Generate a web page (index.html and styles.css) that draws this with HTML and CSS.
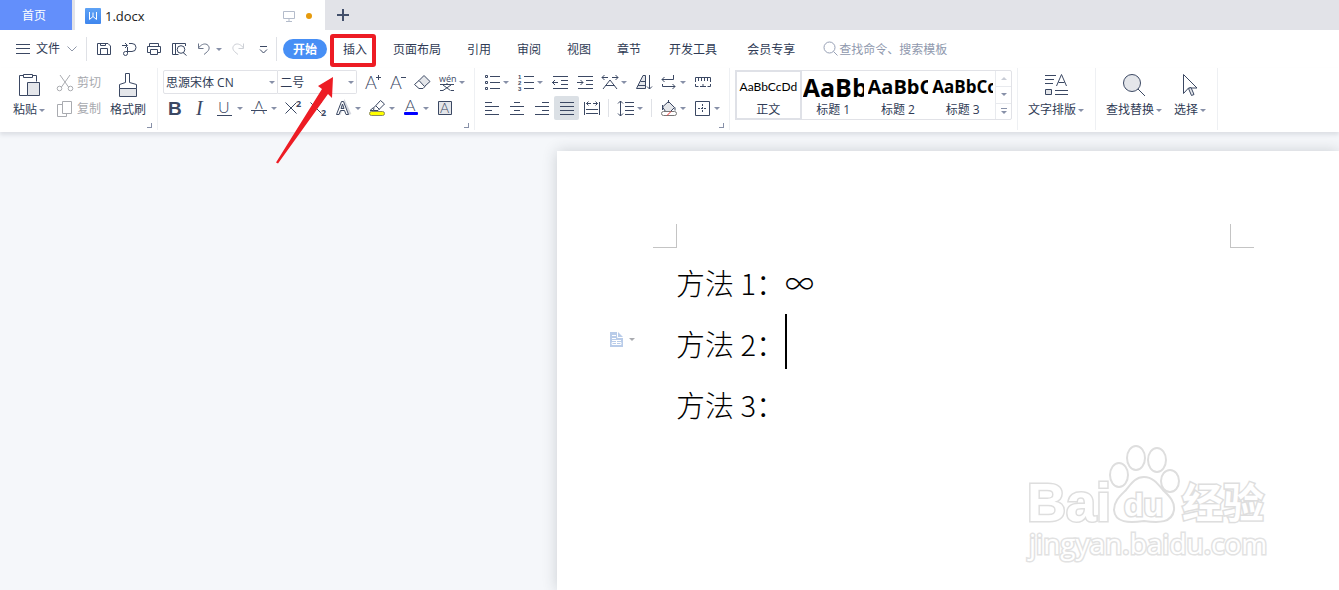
FILE: index.html
```html
<!DOCTYPE html>
<html lang="zh-CN">
<head>
<meta charset="utf-8">
<title>1.docx</title>
<link rel="stylesheet" href="styles.css">
</head>
<body>
<header class="tabs">
  <button class="tab-home">首页</button>
  <div class="tab-doc">
    <svg class="logo" width="16" height="16" viewBox="0 0 16 16"><defs><linearGradient id="lg" x1="0" y1="0" x2="0" y2="1"><stop offset="0" stop-color="#5ea2f5"/><stop offset="1" stop-color="#3f86ee"/></linearGradient></defs><rect width="16" height="16" rx="1" fill="url(#lg)"/><path d="M4.500 4V11.500L8 8.500L11.500 11.500V4M8 4.500V8.500" fill="none" stroke="#fff"/></svg>
    <span class="tab-name">1.docx</span>
    <svg class="i monitor" width="12" height="12" viewBox="0 0 12 12"><path d="M.5 1.500h11v7h-11zM6 8.500v3M3 11.500h6"/></svg>
    <span class="dot"></span>
  </div>
  <button class="tab-add" aria-label="新建"><svg width="12" height="12" viewBox="0 0 12 12"><path d="M6 0v12M0 6h12" stroke="#43506b" stroke-width="2"/></svg></button>
</header>

<nav class="menu">
  <button class="file">
    <svg class="i" width="14" height="12" viewBox="0 0 14 12"><path d="M0 1.500h14M0 5.500h14M0 10.500h14"/></svg>
    <span>文件</span>
    <svg class="i soft" width="10" height="6" viewBox="0 0 10 6"><path d="M.5 .5L5 5L9.500 .5"/></svg>
  </button>
  <div class="quick">
    <button class="b" aria-label="保存"><svg class="i" viewBox="0 0 24 24"><path d="M5.500 6.500h10.500l2.500 2.500v8.500h-13zM8.500 17v-5.500h7V17M8.500 6.500v2h5v-2"/></svg></button>
    <button class="b" aria-label="输出"><svg class="i" viewBox="0 0 24 24"><path d="M5 8.500h5M8 6l2.500 2.500L8 11M12 6.500h3a3.800 3.800 0 0 1 0 8h-6.500a2 2 0 1 0 2 2V10"/></svg></button>
    <button class="b" aria-label="打印"><svg class="i" viewBox="0 0 24 24"><path d="M7.500 9V6.500h9V9M8.500 15.500h-3V9.500h13v6h-3M8.500 12.500h7v5h-7z"/></svg></button>
    <button class="b" aria-label="打印预览"><svg class="i" viewBox="0 0 24 24"><path d="M18.500 9V6.500h-13v11h6M8.500 6.500v11M16 15.500l3.500 3"/><circle cx="14" cy="12.500" r="3.800"/></svg></button>
    <button class="b drop" aria-label="撤销"><svg class="i mid" viewBox="0 0 24 24"><path d="M6.500 6.500v5h5M6.500 11c2-3 5.500-5 8.500-3.500 3 2 2.500 5 .5 7l-3.500 3"/></svg><i class="caret"></i></button>
    <button class="b" aria-label="恢复"><svg class="i pale" viewBox="0 0 24 24"><path d="M17.500 6.500v5h-5M17.500 11c-2-3-5.500-5-8.500-3.500-3 2-2.500 5-.5 7l3.500 3"/></svg></button>
    <button class="b" aria-label="更多"><svg class="i" viewBox="0 0 24 24"><path d="M9 9.500h7M9 12.500l3.500 3.500 3.500-3.500"/></svg></button>
  </div>
  <button class="item active">开始</button>
  <button class="item">插入</button>
  <button class="item">页面布局</button>
  <button class="item">引用</button>
  <button class="item">审阅</button>
  <button class="item">视图</button>
  <button class="item">章节</button>
  <button class="item wide">开发工具</button>
  <button class="item wide">会员专享</button>
  <label class="search">
    <svg class="i" width="16" height="16" viewBox="0 0 16 16"><circle cx="6.500" cy="6.500" r="5.500"/><path d="M10.500 10.500l4 4"/></svg>
    <input type="text" placeholder="查找命令、搜索模板" aria-label="查找命令">
  </label>
</nav>

<section class="ribbon">
  <div class="group clip">
    <button class="big">
      <svg class="i" viewBox="0 0 24 26"><path d="M6 3.500H2.500v20h8M16 3.500h3.500v6M6.500 2.500h9v3h-9z"/><path class="f" d="M10.500 10.500h12v13h-12z"/></svg>
      <span>粘贴<i class="caret"></i></span>
    </button>
    <div class="stack">
      <button class="line"><svg class="i" width="18" height="18" viewBox="0 0 18 18"><path d="M4 1l8.500 12M14 1L5.500 13"/><circle cx="3.500" cy="14.500" r="2.300"/><circle cx="14.500" cy="14.500" r="2.300"/></svg>剪切</button>
      <button class="line"><svg class="i" width="18" height="18" viewBox="0 0 18 18"><path d="M6.500 1.500h9v12h-9zM6 4.500H1.500v12h9V14"/></svg>复制</button>
    </div>
    <button class="big">
      <svg class="i" viewBox="0 0 24 26"><path class="f" d="M3.500 16.500h17v8h-17z"/><path d="M3.500 16.500v-4l6-2v-9h4v9l7 2v4"/></svg>
      <span>格式刷</span>
    </button>
    <i class="launch"></i>
  </div>

  <div class="group tools font">
    <div class="row">
      <span class="combo family"><select aria-label="字体"><option>思源宋体 CN</option></select><i class="caret"></i></span>
      <span class="combo size"><select aria-label="字号"><option>二号</option></select><i class="caret"></i></span>
      <button class="b" aria-label="增大字号"><svg class="i" viewBox="0 0 24 24"><text x="4" y="19" class="t18">A</text><path d="M15 7.500h5M17.500 5v5"/></svg></button>
      <button class="b" aria-label="减小字号"><svg class="i" viewBox="0 0 24 24"><text x="4" y="19" class="t18">A</text><path d="M15 7.500h5"/></svg></button>
      <button class="b" aria-label="清除格式"><svg class="i" viewBox="0 0 24 24"><path class="f" d="M9 10.500l5-5 6 6-5.500 5z"/><path d="M9 10.500l-4.500 4 4.500 4h4l2-2"/></svg></button>
      <button class="b drop" aria-label="拼音指南"><svg class="i" viewBox="0 0 24 24"><text x="4" y="12" class="pin">wén</text><path d="M5 14.500h14M12 13v2M8 15l7.500 5.500M16 15l-8 5.500M5 20.500h3M16 20.500h3"/></svg><i class="caret"></i></button>
    </div>
    <div class="row">
      <button class="b" aria-label="加粗"><svg class="i" viewBox="0 0 24 24"><text x="5" y="19" class="bold">B</text></svg></button>
      <button class="b" aria-label="倾斜"><svg class="i" viewBox="0 0 24 24"><text x="8" y="19" class="ital">I</text></svg></button>
      <button class="b drop" aria-label="下划线"><svg class="i" viewBox="0 0 24 24"><text x="5" y="17" class="t16">U</text><path d="M4 19.500h15"/></svg><i class="caret"></i></button>
      <button class="b drop" aria-label="删除线"><svg class="i" viewBox="0 0 24 24"><text x="6" y="18" class="t18">A</text><path class="k" d="M4 13.500h16"/><path d="M4 14.500h16"/></svg><i class="caret"></i></button>
      <button class="b" aria-label="上标"><svg class="i" viewBox="0 0 24 24"><path d="M4.500 6.500l11 11M15.500 6.500l-11 11"/><text x="15" y="11" class="sup">2</text></svg></button>
      <button class="b" aria-label="下标"><svg class="i" viewBox="0 0 24 24"><path d="M4.500 6.500l11 11M15.500 6.500l-11 11"/><text x="15" y="20" class="sup">2</text></svg></button>
      <button class="b drop" aria-label="文字效果"><svg class="i" viewBox="0 0 24 24"><path class="glow" d="M8 18.500L13.500 6.500l5.500 12"/><path class="w" d="M5.500 18.500L10.500 5.500h2l5 13H15l-1.500-4h-4l-1.500 4zM10 12.500h3L11.500 8z"/></svg><i class="caret"></i></button>
      <button class="b drop" aria-label="突出显示"><svg class="i" viewBox="0 0 24 24"><path d="M9 11.500l6.500-7 4 3.500-6.500 6.500H8.500zM8.500 14.500H5l3.500-3M11 10l3.500 3.500"/><rect x="4.500" y="15.500" width="15" height="4" rx="2" fill="#ff0" stroke="#8a8a60"/></svg><i class="caret"></i></button>
      <button class="b drop" aria-label="字体颜色"><svg class="i" viewBox="0 0 24 24"><text x="6" y="15" class="t16">A</text><rect class="blue" x="5" y="16" width="14" height="3" rx="1"/></svg><i class="caret"></i></button>
      <button class="b" aria-label="字符底纹"><svg class="i" viewBox="0 0 24 24"><path class="f" d="M5.500 5.500h13v13h-13z"/><text x="7" y="17" class="t14">A</text></svg></button>
    </div>
    <i class="launch"></i>
  </div>

  <div class="group tools para">
    <div class="row">
      <button class="b drop" aria-label="项目符号"><svg class="i" viewBox="0 0 24 24"><path d="M11 6.500h10M11 12.500h10M11 18.500h10"/><path d="M6.500 5.500h2v2h-2zM6.500 11.500h2v2h-2zM6.500 17.500h2v2h-2z"/></svg><i class="caret"></i></button>
      <button class="b drop" aria-label="编号"><svg class="i" viewBox="0 0 24 24"><path d="M11 6.500h10M11 12.500h10M11 18.500h10"/><text x="5" y="9" class="num">1</text><text x="5" y="15" class="num">2</text><text x="5" y="21" class="num">3</text></svg><i class="caret"></i></button>
      <button class="b" aria-label="减少缩进"><svg class="i" viewBox="0 0 24 24"><path d="M6 6.500h15M14 10.500h7M14 14.500h7M6 18.500h15M5 12.500h6M8 10l-2.500 2.500L8 15"/></svg></button>
      <button class="b" aria-label="增加缩进"><svg class="i" viewBox="0 0 24 24"><path d="M6 6.500h15M14 10.500h7M14 14.500h7M6 18.500h15M5 12.500h6M8.500 10l2.500 2.500L8.500 15"/></svg></button>
      <button class="b drop" aria-label="中文版式"><svg class="i" viewBox="0 0 24 24"><path d="M5 7.500h6M7.500 5L5 7.500 7.500 10M15 7.500h6M18.500 5L21 7.500 18.500 10M6 19l7-9 7 9M8.500 15.500h9"/></svg><i class="caret"></i></button>
      <button class="b" aria-label="排序"><svg class="i" viewBox="0 0 24 24"><path class="f" d="M14.500 5.500v13h-9L12 5.500zM7 15.500h7.500M9.500 11.500h5"/><path d="M18.500 5v14M16 16.500l2.500 2.500 2.500-2.500"/></svg></button>
      <button class="b drop" aria-label="换行"><svg class="i" viewBox="0 0 24 24"><path d="M17.500 5v4.500H6M8.500 7L6 9.500 8.500 12M6.500 14v2.500H19M16.500 14l2.500 2.500-2.500 2.500"/></svg><i class="caret"></i></button>
      <button class="b" aria-label="标尺"><svg class="i" viewBox="0 0 24 24"><path d="M5.500 12V7.500h15V12M8.500 8v3M11.500 8v3M14.500 8v3M17.500 8v3M5.500 14v2.500h3M20.500 14v2.500h-3M10 16.500h6M13 14v2.500"/></svg></button>
    </div>
    <div class="row">
      <button class="b" aria-label="左对齐"><svg class="i" viewBox="0 0 24 24"><path d="M6 6.500h7M6 10.500h14M6 14.500h7M6 18.500h14"/></svg></button>
      <button class="b" aria-label="居中"><svg class="i" viewBox="0 0 24 24"><path d="M10 6.500h6M6 10.500h14M10 14.500h6M6 18.500h14"/></svg></button>
      <button class="b" aria-label="右对齐"><svg class="i" viewBox="0 0 24 24"><path d="M13 6.500h7M6 10.500h14M13 14.500h7M6 18.500h14"/></svg></button>
      <button class="b on" aria-label="两端对齐"><svg class="i" viewBox="0 0 24 24"><path d="M6 6.500h14M6 10.500h14M6 14.500h14M6 18.500h14"/></svg></button>
      <button class="b" aria-label="分散对齐"><svg class="i" viewBox="0 0 24 24"><path d="M5.500 6v13M20.500 6v13M7 13.500h12M7 17.500h12M7.500 7.500H12M9.500 5.500l-2 2 2 2M14 7.500h4.500M16.500 5.500l2 2-2 2"/></svg></button>
      <i class="sep"></i>
      <button class="b drop" aria-label="行距"><svg class="i" viewBox="0 0 24 24"><path d="M12 6.500h9M12 10.500h9M12 14.500h9M12 18.500h9M7.500 5v15M5 7.500L7.500 5 10 7.500M5 17.500L7.500 20l2.500-2.500"/></svg><i class="caret"></i></button>
      <i class="sep"></i>
      <button class="b drop" aria-label="底纹"><svg class="i" viewBox="0 0 24 24"><path class="f" d="M6.500 11l6-5.500 6 6-4 4h-5z"/><path d="M6.500 9v5M19 11.500v3M12.500 4v3"/><rect x="5.500" y="15.500" width="15" height="4" rx="2" fill="#fff" stroke="#777"/><path d="M11 19.500l4-4" class="red"/></svg><i class="caret"></i></button>
      <button class="b drop" aria-label="边框"><svg class="i" viewBox="0 0 24 24"><path d="M5.500 5.500h14v14h-14z"/><path stroke-dasharray="2 1" d="M12.500 8v9M8 12.500h9"/></svg><i class="caret"></i></button>
    </div>
    <i class="launch"></i>
  </div>

  <div class="group styles">
    <div class="gallery">
      <button class="card sel"><b class="s0">AaBbCcDd</b><span>正文</span></button>
      <button class="card"><b class="s1">AaBb</b><span>标题 1</span></button>
      <button class="card"><b class="s2">AaBbC</b><span>标题 2</span></button>
      <button class="card"><b class="s3">AaBbCc</b><span>标题 3</span></button>
      <div class="scroll">
        <button aria-label="上一行"><i class="caret up"></i></button>
        <button aria-label="下一行"><i class="caret"></i></button>
        <button aria-label="展开"><i class="bar"></i><i class="caret"></i></button>
      </div>
    </div>
  </div>

  <div class="group pad">
    <button class="big">
      <svg class="i" viewBox="0 0 24 26"><path d="M1 3.500h11M1 7.500h9M1 11.500h8M11 18.500h13M11 22.500h13"/><path class="f" d="M1.500 17.500h6v5h-6z"/><path d="M12.500 14L17.500 2.500 22.500 14M14.500 10.500h6"/></svg>
      <span>文字排版<i class="caret"></i></span>
    </button>
  </div>
  <div class="group pad">
    <button class="big">
      <svg class="i" viewBox="0 0 24 26"><circle class="f" cx="10" cy="11" r="8.500"/><path d="M16 17l7 7"/></svg>
      <span>查找替换<i class="caret"></i></span>
    </button>
    <button class="big">
      <svg class="i" viewBox="0 0 24 26"><path d="M5.500 2.500v19l5-5.500h8.500z"/><path class="f" d="M10.500 16.500l2.500-1 3 7-2.500 1z"/></svg>
      <span>选择<i class="caret"></i></span>
    </button>
  </div>
</section>

<main class="work">
  <article class="page">
    <div class="marks"><i class="mark"></i><i class="mark right"></i></div>
    <p>方法 1：∞</p>
    <p class="now">方法 2：<i class="cursor"></i>
      <button class="side" aria-label="段落布局"><svg width="13" height="15" viewBox="0 0 13 15"><path d="M0 0h8l5 5v10H0z" fill="#b9cce9"/><path d="M7.500 0v5.500H13M2 3.500h4M2 6.500h4M2 8.500h9M2 10.500h9v2H2zM6.500 9v4" fill="none" stroke="#fff"/></svg><i class="caret"></i></button>
    </p>
    <p>方法 3：</p>
    <svg class="mark-logo" width="250" height="130" viewBox="0 0 250 130" role="img" aria-label="Baidu 经验">
      <g class="wm">
        <text x="3" y="79" class="w1">Bai</text>
        <ellipse cx="95" cy="33" rx="9" ry="12"/><ellipse cx="112" cy="16" rx="9" ry="12"/><ellipse cx="133" cy="18" rx="9" ry="12"/><ellipse cx="146" cy="39" rx="9" ry="11"/>
        <path d="M120 35c9 0 14 7 19 13 6 6 12 11 11 20-2 13-15 13-30 11-15 2-29 2-30-11 0-9 6-14 12-20 5-6 9-13 18-13z"/>
        <text x="100" y="74" class="w2">du</text>
        <text x="158" y="76" class="w3">经验</text>
        <text x="5" y="112" class="w4">jingyan.baidu.com</text>
      </g>
    </svg>
  </article>
</main>

<svg class="note" width="110" height="140" viewBox="0 0 110 140" aria-hidden="true"><rect x="61" y="8" width="42" height="29" rx="1" fill="none" stroke="#ed1c24" stroke-width="4"/><path d="M62 49l-15 9 4 3L5 134.500l2 1L57 66l4 4z" fill="#ed1c24"/></svg>
</body>
</html>
```
FILE: styles.css
```css
* { box-sizing: border-box; }
body {
  margin: 0;
  min-height: 100vh;
  display: flex;
  flex-direction: column;
  position: relative;
  overflow: hidden;
  background: #f5f7fa;
  color: #2f3b55;
  font: 12px/16px "Open Sans", "Noto Sans CJK SC", sans-serif;
}
button, input, select { font: inherit; color: inherit; background: none; border: 0; padding: 0; margin: 0; }
svg { display: block; flex: none; }
.i { fill: none; stroke: #3b4863; }
.i text { stroke: none; fill: #3b4863; font-family: Lato, sans-serif; font-weight: 300; }
.i .f { fill: #e4e6ea; }
.i .k { stroke: #fff; }
.i .w { fill: #fff; }
.i .glow { stroke: #d5d8df; stroke-width: 3; }
.i .red { stroke: #e33; }
.i .blue { fill: #00f; stroke: none; }
.i.soft { stroke: #8f97a8; }
.i.mid { stroke: #6b7589; }
.i.pale { stroke: #cdd0d6; }
.caret { flex: none; display: inline-block; border: 3px solid transparent; border-top-color: #8790a8; border-bottom-width: 0; }
.caret.up { border-top-width: 0; border-bottom: 3px solid #c8ccd6; }

.tabs { display: flex; height: 30px; background: #e2e3e8; }
.tab-home { width: 72px; background: #638ffb; color: #fff; padding: 2px 4px 0 0; }
.tab-doc { width: 250px; margin-left: 3px; padding: 2px 13px 0 10px; background: #fff; display: flex; align-items: center; }
.tab-name { margin: 0 auto 0 4px; color: #222; font-size: 13px; }
.i.monitor { stroke: #b4bccb; }
.dot { width: 6px; height: 6px; margin-left: 11px; border-radius: 50%; background: #e69a0c; }
.tab-add { width: 36px; display: grid; place-items: center; }

.menu { display: flex; align-items: center; height: 38px; background: #fff; }
.file { display: flex; align-items: center; width: 87px; height: 24px; padding-left: 16px; gap: 6px; border-right: 1px solid #dfe1e6; }
.file .soft { margin-left: 1px; }
.quick { display: flex; align-items: center; height: 24px; width: 190px; padding-left: 5px; border-right: 1px solid #dfe1e6; }
.item { padding: 2px 13px 0; height: 20px; line-height: 18px; white-space: nowrap; }
.item.active { margin: 0 3px 0 6px; padding: 2px 10px 0; border-radius: 10px; background: #478ff5; color: #fff; font-weight: 700; }
.item.wide { padding: 2px 15px 0; }
.search { display: flex; align-items: center; padding-left: 13px; flex: 1; }
.search .i { stroke: #97a0b5; }
.search input { flex: 1; min-width: 0; outline: 0; padding-top: 1px; }
.search input::placeholder { color: #8f98ad; opacity: 1; }

.ribbon { position: relative; display: flex; height: 64px; background: #fff; box-shadow: 0 3px 4px rgba(50, 60, 80, .12); }
.group { position: relative; display: flex; border-right: 1px solid #eef0f3; margin-bottom: 2px; }
.launch { position: absolute; right: 5px; bottom: 2px; width: 5px; height: 5px; border: 1px solid #8790a8; border-width: 0 1px 1px 0; }
.big { display: flex; flex-direction: column; align-items: center; height: 52px; padding-top: 4px; white-space: nowrap; }
.big svg { width: 24px; height: 26px; }
.big span { display: flex; align-items: center; line-height: 16px; margin-top: 4px; gap: 2px; }
.clip { width: 158px; padding-left: 13px; }
.clip .big + .stack { margin-left: 11px; }
.stack { display: flex; flex-direction: column; gap: 2px; padding-top: 3px; margin-right: 9px; }
.line { display: flex; align-items: center; gap: 3px; height: 24px; color: #a7a9ae; }
.line .i { stroke: #a9abb0; }

.tools { flex-direction: column; gap: 2px; padding: 2px 5px 0; }
.row { display: flex; height: 24px; }
.b { display: flex; align-items: center; width: 25px; height: 24px; }
.b svg { width: 24px; height: 24px; }
.b.drop { width: 34px; }
.on { background: #dbe0e5; border-radius: 2px; }
.sep { width: 9px; display: flex; justify-content: center; }
.sep::after { content: ""; width: 1px; background: #dfe1e6; margin: 3px 0; }
.font { width: 317px; }
.para { width: 255px; padding-left: 4px; }
.combo { display: flex; align-items: center; height: 24px; border: 1px solid #e1e2e7; padding: 1px 2px 0; }
.combo select { appearance: none; outline: 0; flex: 1; min-width: 0; }
.family { width: 116px; border-radius: 2px 0 0 2px; }
.size { width: 79px; border-left: 0; border-radius: 0 2px 2px 0; margin-right: 4px; }
.i .t18 { font-size: 18px; }
.i .t16 { font-size: 16px; }
.i .t14 { font-size: 14px; }
.i .pin { font: 9px "Open Sans", sans-serif; }
.i .bold { font: bold 19px "Liberation Sans", sans-serif; }
.i .ital { font: italic 20px "Liberation Serif", serif; }
.i .sup { font: bold 9px "Open Sans", sans-serif; }
.i .num { font: bold 6px "Liberation Sans", sans-serif; }

.styles { width: 288px; padding: 2px 5px 0; }
.gallery { display: flex; width: 277px; height: 50px; border: 1px solid #e1e2e7; border-radius: 2px; }
.card { flex: 1; min-width: 0; display: flex; flex-direction: column; overflow: hidden; padding: 0 2px; }
.card b { height: 31px; line-height: 32px; color: #000; white-space: nowrap; width: 100%; overflow: hidden; text-align: left; }
.card span { align-self: center; line-height: 16px; }
.sel { outline: 2px solid #dfe1e7; outline-offset: -1px; }
.card .s0 { font: 12px/32px Lato, sans-serif; text-align: center; }
.s1 { font-size: 25px; }
.s2 { font-size: 20px; }
.s3 { font-size: 17px; }
.scroll { width: 16px; display: flex; flex-direction: column; border-left: 1px solid #e8eaee; }
.scroll button { flex: 1; display: flex; flex-direction: column; align-items: center; justify-content: center; gap: 2px; }
.scroll button + button { border-top: 1px solid #e8eaee; }
.bar { width: 6px; height: 1px; background: #8790a8; }
.pad { padding: 0 11px 0 10px; gap: 12px; }

.work { flex: 1; display: grid; grid-template-columns: minmax(0, 1fr) 782px; padding-top: 19px; }
.page { grid-column: 2; position: relative; background: #fff; box-shadow: 0 0 14px rgba(40, 50, 60, .2); padding: 73px 85px 0 96px; font: 300 29px/61px "Noto Sans CJK SC", sans-serif; color: #000; }
.page p { margin: 0 24px 0 23px; position: relative; display: flex; align-items: center; white-space: pre; height: 61px; }
.marks { display: flex; justify-content: space-between; margin-bottom: 4px; }
.mark { width: 24px; height: 24px; border: 1px solid #c4c4c4; border-width: 0 1px 1px 0; }
.mark.right { border-width: 0 0 1px 1px; }
.cursor { width: 2px; height: 55px; margin-bottom: 5px; background: #000; }
.side { position: absolute; left: -66px; top: 19px; display: flex; align-items: center; gap: 6px; }
.side .caret { border-top-color: #a9abb0; }
.mark-logo { position: absolute; right: 65px; bottom: 18px; }
.wm { fill: #fff; stroke: #dedede; stroke-width: 2; }
.wm text { paint-order: stroke; stroke-width: 3; font-family: "Liberation Sans", sans-serif; font-weight: 700; }
.wm .w1 { font-size: 54px; }
.wm .w2 { font-size: 32px; }
.wm .w3 { font-size: 41px; font-family: "Noto Sans CJK SC", sans-serif; }
.wm .w4 { font: 400 28px "Open Sans", sans-serif; stroke: #e2e2e2; }

.note { position: absolute; left: 271px; top: 28px; pointer-events: none; }
```
